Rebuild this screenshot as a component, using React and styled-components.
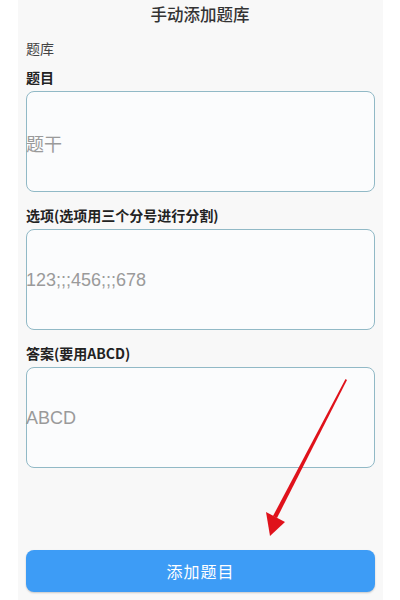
import React from 'react';
import styled, { createGlobalStyle } from 'styled-components';

const GlobalStyle = createGlobalStyle`
  html, body {
    margin: 0;
    padding: 0;
    background: #fff;
  }
  body {
    font-family: "Noto Sans CJK SC", "Liberation Sans", sans-serif;
  }
`;

const fields = [
  { label: '题目', placeholder: '题干' },
  { label: '选项(选项用三个分号进行分割)', placeholder: '123;;;456;;;678' },
  { label: '答案(要用ABCD)', placeholder: 'ABCD' },
];

const App = () => {
  return (
    <>
      <GlobalStyle />
      <Screen>
        <Panel>
          <Title>手动添加题库</Title>
          <SubLabel>题库</SubLabel>
          {fields.map((f) => (
            <Field key={f.label}>
              <Label>{f.label}</Label>
              <Box>
                <Placeholder>{f.placeholder}</Placeholder>
              </Box>
            </Field>
          ))}
          <Spacer />
          <Button>添加题目</Button>
          <Arrow width="400" height="600" viewBox="0 0 400 600">
            <path d="M347 380 L277 518 L273 516 L345.5 379 Z" fill="#e0121b" />
            <path d="M270 536 L266 512 L285 522 Z" fill="#e0121b" />
          </Arrow>
        </Panel>
      </Screen>
    </>
  );
};

export default App;

const Screen = styled.div`
  width: 400px;
  height: 600px;
  display: flex;
  justify-content: center;
  background: #fff;
  overflow: hidden;
`

const Panel = styled.div`
  position: relative;
  width: 365px;
  margin-left: 1px;
  background: #f8f8f8;
  padding: 0 8px;
  box-sizing: border-box;
  display: flex;
  flex-direction: column;
`

const Title = styled.div`
  text-align: center;
  font-size: 16.5px;
  font-weight: 500;
  color: #333;
  line-height: 22px;
  padding-top: 3px;
  margin-left: -1px;
`

const SubLabel = styled.div`
  font-size: 14px;
  color: #444;
  line-height: 20px;
  margin-top: 13px;
`

const Field = styled.div`
  display: flex;
  flex-direction: column;
  margin-top: 9px;

  & + & {
    margin-top: 13px;
  }
`

const Label = styled.div`
  font-size: 14px;
  font-weight: 700;
  color: #222;
  line-height: 20px;
  margin-bottom: 4px;
`

const Box = styled.div`
  height: 101px;
  box-sizing: border-box;
  border: 1.5px solid #91b9c6;
  border-radius: 8px;
  background: #fbfcfd;
  display: flex;
  align-items: center;
`

const Placeholder = styled.span`
  font-family: "Liberation Sans", "Noto Sans CJK SC", sans-serif;
  font-size: 18px;
  color: #9a9a9a;
  margin-left: -1px;
  margin-top: 2px;
`

const Spacer = styled.div`
  flex: 1;
`

const Button = styled.div`
  height: 42px;
  margin-bottom: 8px;
  border-radius: 8px;
  background: #3d9cf6;
  box-shadow: 0 1px 2px rgba(0, 0, 0, 0.2);
  color: #fff;
  font-size: 16px;
  display: flex;
  align-items: center;
  justify-content: center;
  letter-spacing: 1px;
`

const Arrow = styled.svg`
  position: absolute;
  left: -18px;
  top: 0;
  pointer-events: none;
`
